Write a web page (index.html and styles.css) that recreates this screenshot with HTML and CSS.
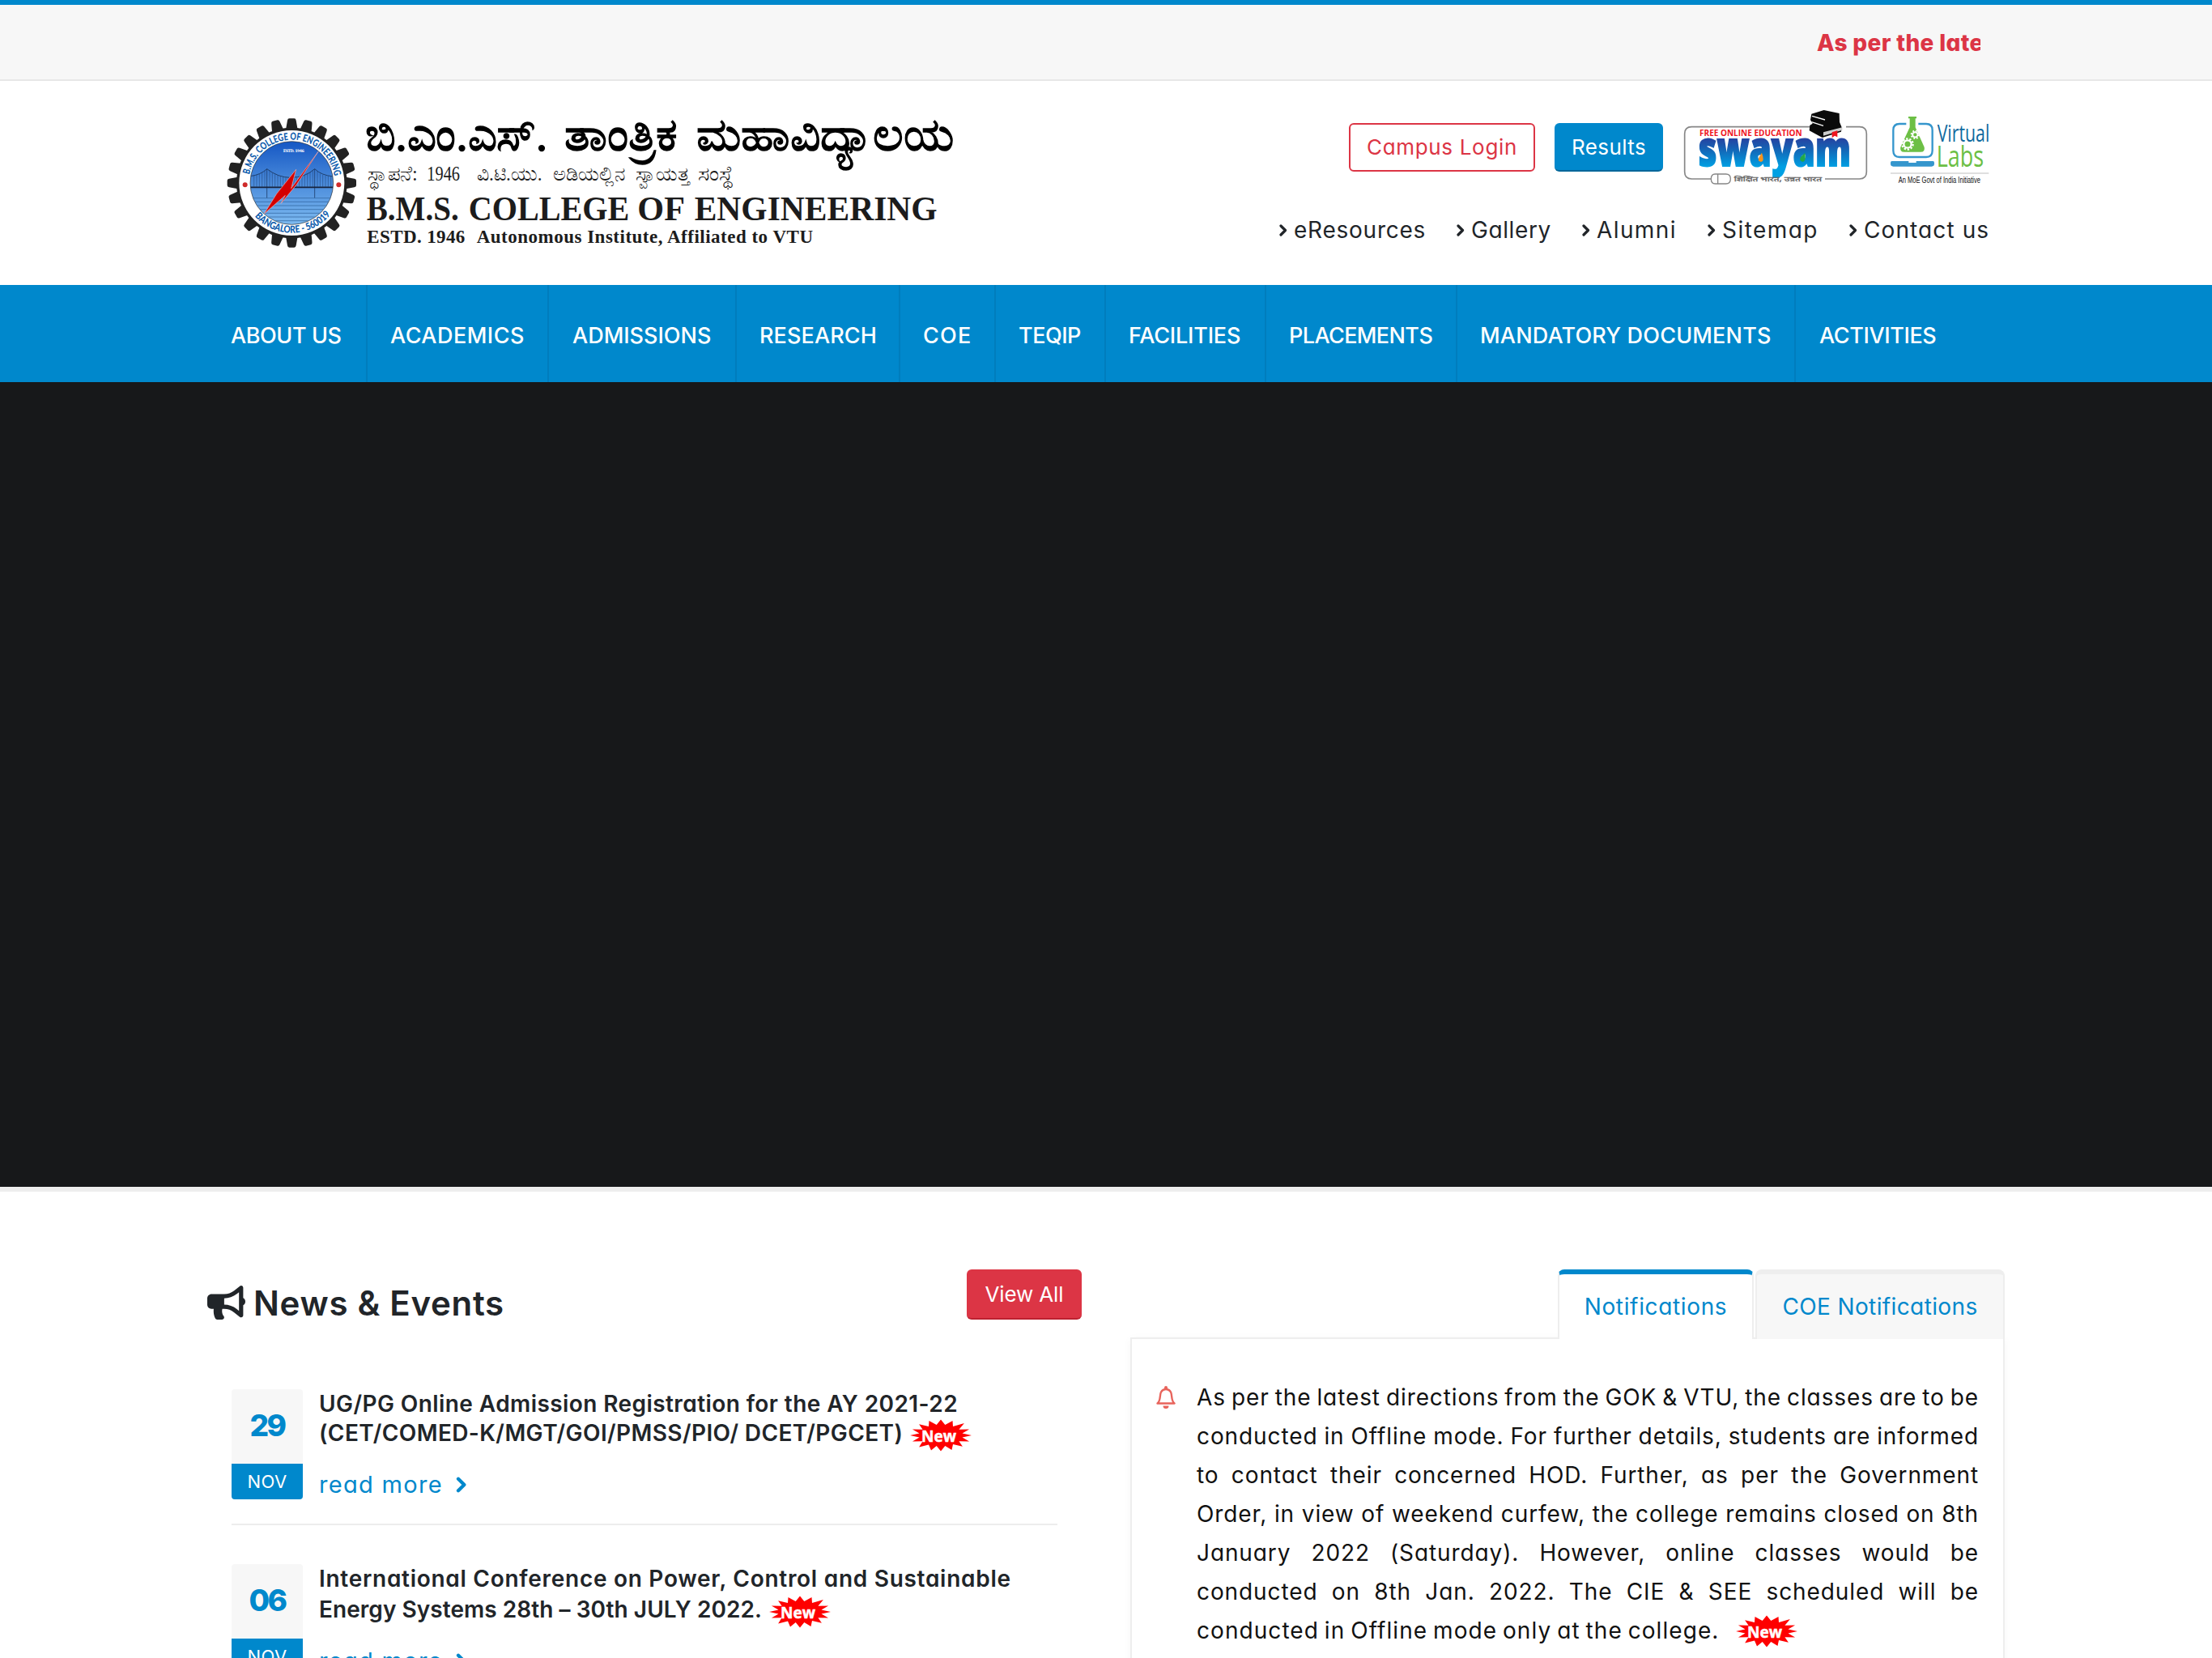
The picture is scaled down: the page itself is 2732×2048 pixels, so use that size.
FILE: index.html
```html
<!DOCTYPE html>
<html lang="en">
<head>
<meta charset="utf-8">
<title>B.M.S. College of Engineering</title>
<link rel="stylesheet" href="styles.css">
</head>
<body>
<svg class="defs" width="0" height="0" aria-hidden="true">
  <defs>
    <symbol id="chev" viewBox="0 0 10 15"><path d="M2 2l5.500 5.500L2 13" fill="none" stroke="currentColor" stroke-width="3.200" stroke-linecap="round" stroke-linejoin="round"/></symbol>
    <symbol id="new" viewBox="0 0 76 40">
      <path class="burst" d="M76 20L64.500 22.500 73.100 27.500 60.400 27.200 64.900 33.800 53 31 51.500 38 43.300 33 38 39.500 32.700 33 26 38.500 23 31.500 11.100 34.500 15.600 27.200 2.900 27.500 11.500 22.500 0 20 11.500 17.500 2.900 12.500 15.600 12.800 11.100 6.200 23 9 23.500 2 32.700 7 38 .5 43.300 7 52.500 2 53 9 66.900 5 60.400 12.800 73.100 12.500 64.500 17.500Z" fill="#fe0000"/>
      <text x="14" y="28" class="new-text" textLength="43" lengthAdjust="spacingAndGlyphs">New</text>
    </symbol>
  </defs>
</svg>

<div class="topbar"><div class="container"><div class="ticker">As per the latest directions</div></div></div>

<header class="header">
  <div class="container header-row">
    <svg class="logo" viewBox="60 60 2700 510" role="img" aria-label="B.M.S. College of Engineering">
      <defs>
        <linearGradient id="sky" x1="0" y1="0" x2="0" y2="1"><stop offset="0" stop-color="#1557c4"/><stop offset=".5" stop-color="#4a8bdb"/><stop offset="1" stop-color="#7dbaf0"/></linearGradient>
        <g id="tooth"><path d="M-23 -192L-16 -232Q-15 -239 -9 -239H9Q15 -239 16 -232L23 -192Z"/></g>
        <g id="teeth"><use href="#tooth"/><use href="#tooth" transform="rotate(15)"/><use href="#tooth" transform="rotate(30)"/></g>
        <path id="arc-top" d="M-157 -31A160 160 0 0 1 159 -18"/>
        <path id="arc-bottom" d="M-137 124A185 185 0 0 0 146 114"/>
        <clipPath id="disc"><circle r="153"/></clipPath>
      </defs>
      <g transform="translate(301 318)">
        <g fill="#222">
          <circle r="205"/>
          <use href="#teeth"/><use href="#teeth" transform="rotate(45)"/><use href="#teeth" transform="rotate(90)"/><use href="#teeth" transform="rotate(135)"/>
          <use href="#teeth" transform="rotate(180)"/><use href="#teeth" transform="rotate(225)"/><use href="#teeth" transform="rotate(270)"/><use href="#teeth" transform="rotate(315)"/>
        </g>
        <circle r="195" fill="#fff"/>
        <circle r="154" fill="url(#sky)" stroke="#333" stroke-width="2"/>
        <g clip-path="url(#disc)" fill="none" stroke="#1e3f6e" stroke-width="2">
          <path d="M-154 -25Q-115 -30 -92 -52Q-50 -20 -5 -20Q50 -20 85 -52Q110 -28 154 -24" stroke-width="3"/>
          <path d="M-140 -28V14M-130 -30V14M-120 -34V14M-110 -38V14M-100 -45V14M-82 -45V14M-72 -38V14M-62 -32V14M-52 -28V14M-42 -24V14M-32 -22V14M-22 -20V14M-12 -20V14M-2 -20V14M8 -20V14M18 -20V14M28 -22V14M38 -25V14M48 -28V14M58 -33V14M68 -40V14M78 -46V14M95 -44V14M105 -35V14M115 -30V14M125 -27V14M135 -25V14M145 -24V14" stroke-width="1.500"/>
          <path d="M-92 -52V56M85 -52V56" stroke-width="2.500"/>
          <path d="M-154 16H154" stroke="#16233c" stroke-width="5"/>
          <path d="M-145 56H145M-140 70H140M-136 84H136M-124 98H124M-112 112H112M-95 126H95M-80 140H80" stroke="#2c5f99"/>
        </g>
        <path d="M98 -116L-2 20 16 -50-56 40-102 114-24 46-40 76 18 6Z" fill="#d40000" stroke="#f3b0b0" stroke-width="2"/>
        <text x="-32" y="-115" class="seal-year" textLength="78">ESTD. 1946</text>
        <text class="seal-text"><textPath href="#arc-top" textLength="446" lengthAdjust="spacingAndGlyphs">B.M.S. COLLEGE OF ENGINEERING</textPath></text>
        <text class="seal-text"><textPath href="#arc-bottom" textLength="318" lengthAdjust="spacingAndGlyphs">BANGALORE - 560019</textPath></text>
        <circle cx="-173" cy="7" r="9" fill="#cf2a2a"/><circle cx="174" cy="7" r="9" fill="#cf2a2a"/>
      </g>
      <g class="kn-title">
        <text x="572" y="197" textLength="676" lengthAdjust="spacingAndGlyphs">ಬಿ.ಎಂ.ಎಸ್.</text>
        <text x="1312" y="197" textLength="418" lengthAdjust="spacingAndGlyphs">ತಾಂತ್ರಿಕ</text>
        <text x="1800" y="197" textLength="956" lengthAdjust="spacingAndGlyphs">ಮಹಾವಿದ್ಯಾಲಯ</text>
      </g>
      <g class="kn-sub">
        <text x="582" y="310" textLength="185" lengthAdjust="spacingAndGlyphs">ಸ್ಥಾಪನೆ:</text>
        <text x="802" y="310" textLength="122" lengthAdjust="spacingAndGlyphs">1946</text>
        <text x="987" y="310" textLength="242" lengthAdjust="spacingAndGlyphs">ವಿ.ಟಿ.ಯು.</text>
        <text x="1270" y="310" textLength="266" lengthAdjust="spacingAndGlyphs">ಅಡಿಯಲ್ಲಿನ</text>
        <text x="1574" y="310" textLength="202" lengthAdjust="spacingAndGlyphs">ಸ್ವಾಯತ್ತ</text>
        <text x="1806" y="310" textLength="134" lengthAdjust="spacingAndGlyphs">ಸಂಸ್ಥೆ</text>
      </g>
      <g class="en-title">
        <text x="578" y="456" textLength="342" lengthAdjust="spacingAndGlyphs">B.M.S.</text>
        <text x="956" y="456" textLength="596" lengthAdjust="spacingAndGlyphs">COLLEGE</text>
        <text x="1582" y="456" textLength="176" lengthAdjust="spacingAndGlyphs">OF</text>
        <text x="1793" y="456" textLength="900" lengthAdjust="spacingAndGlyphs">ENGINEERING</text>
      </g>
      <g class="en-sub">
        <text x="580" y="540" textLength="363">ESTD. 1946</text>
        <text x="986" y="540" textLength="1246">Autonomous Institute, Affiliated to VTU</text>
      </g>
    </svg>

    <div class="header-side">
      <div class="actions">
        <a class="btn btn-outline">Campus Login</a>
        <a class="btn btn-blue">Results</a>
        <svg class="swayam" viewBox="75 30 705 300" role="img" aria-label="Swayam">
          <defs><linearGradient id="sw" gradientUnits="userSpaceOnUse" x1="0" y1="150" x2="0" y2="285"><stop offset="0" stop-color="#27409f"/><stop offset=".35" stop-color="#1368b8"/><stop offset=".8" stop-color="#00a0e3"/><stop offset="1" stop-color="#00a0e3"/></linearGradient></defs>
          <path d="M560 110H118Q92 110 92 136V277Q92 303 118 303H205M612 303H740Q766 303 766 277V136Q766 110 740 110H690" fill="none" stroke="#868686" stroke-width="5"/>
          <path d="M262 303Q262 285 245 285H205Q190 285 190 303T205 321H245Q262 321 262 303ZM215 285V321" fill="#fff" stroke="#868686" stroke-width="4"/>
          <text x="147" y="143" class="sw-tag" textLength="380" lengthAdjust="spacingAndGlyphs">FREE ONLINE EDUCATION</text>
          <text x="143" y="256" class="sw-name" textLength="565" lengthAdjust="spacingAndGlyphs">swayam</text>
          <path d="M378 206Q390 238 375 240Q360 238 368 222Z" fill="#f7931e"/>
          <path d="M538 206Q543 236 530 240Q514 236 522 222Z" fill="#22a94a"/>
          <text x="275" y="312" class="sw-sub" textLength="325" lengthAdjust="spacingAndGlyphs">शिक्षित भारत, उन्नत भारत</text>
          <path d="M562 62L608 48 665 60 666 92 674 112 672 128 602 150 554 124 556 104 566 98 558 84Z" fill="#0a0a0a"/>
          <path d="M564 70L612 84M562 92L606 106" stroke="#fff" stroke-width="4"/>
          <path d="M606 130L676 112V122L606 143Z" fill="#ccc"/>
          <path d="M638 130L658 124V148L648 143 638 151Z" fill="#f0141e"/>
        </svg>
        <svg class="vlabs" viewBox="840 60 390 270" role="img" aria-label="Virtual Labs">
          <path d="M913 99H888Q865 99 865 122V198Q865 222 888 222H987Q1010 222 1010 198V122Q1010 99 987 99H958" fill="none" stroke="#3596cd" stroke-width="7"/>
          <path d="M860 237H922V243H950V237H1012Q1017 237 1017 243V247Q1017 257 1007 257H865Q855 257 855 247V243Q855 237 860 237Z" fill="#3596cd"/>
          <path d="M921 72H951V79H947V112L980 185Q984 203 966 203H906Q888 203 892 185L926 112V79H921Z" fill="#6cbf45"/>
          <circle cx="918" cy="174" r="20" fill="none" stroke="#fff" stroke-width="7" stroke-dasharray="7 5.570"/>
          <circle cx="918" cy="174" r="14" fill="none" stroke="#fff" stroke-width="7"/>
          <circle cx="946" cy="139" r="14" fill="none" stroke="#fff" stroke-width="6" stroke-dasharray="5.500 5.500"/>
          <circle cx="946" cy="139" r="9.500" fill="none" stroke="#fff" stroke-width="6"/>
          <text x="1028" y="164" class="vl-a" textLength="194" lengthAdjust="spacingAndGlyphs">Virtual</text>
          <text x="1025" y="257" class="vl-b" textLength="175" lengthAdjust="spacingAndGlyphs">Labs</text>
          <path d="M855 282H1219" stroke="#d5d5d5" stroke-width="4"/>
          <text x="884" y="317" class="vl-c" textLength="304" lengthAdjust="spacingAndGlyphs">An MoE Govt of India Initiative</text>
        </svg>
      </div>
      <nav class="quick">
        <a class="q1"><svg><use href="#chev"/></svg>eResources</a>
        <a class="q2"><svg><use href="#chev"/></svg>Gallery</a>
        <a class="q3"><svg><use href="#chev"/></svg>Alumni</a>
        <a class="q4"><svg><use href="#chev"/></svg>Sitemap</a>
        <a class="q5"><svg><use href="#chev"/></svg>Contact us</a>
      </nav>
    </div>
  </div>
</header>

<nav class="mainnav">
  <div class="container menu">
    <a class="m1">ABOUT US</a><a class="m2">ACADEMICS</a><a class="m3">ADMISSIONS</a><a class="m4">RESEARCH</a><a class="m5">COE</a><a class="m6">TEQIP</a><a class="m7">FACILITIES</a><a class="m8">PLACEMENTS</a><a class="m9">MANDATORY DOCUMENTS</a><a class="m10">ACTIVITIES</a>
  </div>
</nav>

<section class="hero"></section>

<main class="container columns">
  <section class="news">
    <div class="news-head">
      <h2><svg viewBox="0 0 576 512"><path fill="currentColor" d="M576 240c0-23.630-12.950-44.040-32-55.120V32.010C544 23.260 537.020 0 512 0c-7.120 0-14.190 2.380-19.980 7.020l-85.030 68.030C364.280 109.190 310.660 128 256 128H64c-35.350 0-64 28.650-64 64v96c0 35.350 28.650 64 64 64h33.700c-1.390 10.480-2.180 21.140-2.180 32 0 39.770 9.260 77.350 25.560 110.940 5.190 10.690 16.520 17.060 28.400 17.060h74.280c26.050 0 41.690-29.840 25.900-50.560-16.400-21.520-26.150-48.360-26.150-77.440 0-11.110 1.620-21.790 4.410-32H256c54.660 0 108.280 18.810 150.980 52.950l85.030 68.030a32.023 32.023 0 0 0 19.980 7.020c24.920 0 32-22.780 32-32V295.130C563.050 284.040 576 263.630 576 240zm-96 141.420l-33.050-26.440C392.950 311.780 325.120 288 256 288v-96c69.120 0 136.950-23.780 190.950-66.980L480 98.580v282.840z"/></svg>News &amp; Events</h2>
      <a class="btn btn-red">View All</a>
    </div>
    <article class="item">
      <div class="date"><span class="day">29</span><span class="month">NOV</span></div>
      <div>
        <h4><span class="l1">UG/PG Online Admission Registration for the AY 2021-22</span><span class="l2">(CET/COMED-K/MGT/GOI/PMSS/PIO/ DCET/PGCET)<svg class="new"><use href="#new"/></svg></span></h4>
        <a class="more">read more<svg><use href="#chev"/></svg></a>
      </div>
    </article>
    <article class="item">
      <div class="date"><span class="day">06</span><span class="month">NOV</span></div>
      <div>
        <h4><span class="l3">International Conference on Power, Control and Sustainable</span><span class="l4">Energy Systems 28th – 30th JULY 2022.<svg class="new"><use href="#new"/></svg></span></h4>
        <a class="more">read more<svg><use href="#chev"/></svg></a>
      </div>
    </article>
  </section>

  <section class="notices">
    <div class="tabs"><a class="tab active">Notifications</a><a class="tab">COE Notifications</a></div>
    <div class="panel">
      <svg class="bell" viewBox="0 0 24 28"><path d="M1.500 21.500C6 18 4 11 6 7.500Q8 4 12 4T18 7.500C20 11 18 18 22.500 21.500Z" fill="none" stroke="#e8645c" stroke-width="2.400" stroke-linejoin="round"/><path d="M12 0a2 2 0 0 1 2 2v2h-4V2a2 2 0 0 1 2-2ZM8.500 24.500h7a3.500 3.500 0 0 1-7 0Z" fill="#e8645c"/></svg>
      <p>
        <span>As per the latest directions from the GOK &amp; VTU, the classes are to be</span>
        <span>conducted in Offline mode. For further details, students are informed</span>
        <span>to contact their concerned HOD. Further, as per the Government</span>
        <span>Order, in view of weekend curfew, the college remains closed on 8th</span>
        <span>January 2022 (Saturday). However, online classes would be</span>
        <span>conducted on 8th Jan. 2022. The CIE &amp; SEE scheduled will be</span>
        <span class="last">conducted in Offline mode only at the college.<svg class="new"><use href="#new"/></svg></span>
      </p>
    </div>
  </section>
</main>
</body>
</html>
```
FILE: styles.css
```css
*{box-sizing:border-box}
body{margin:0;height:2048px;overflow:hidden;background:#fff;color:#212529;font-family:Inter,"Open Sans",sans-serif;font-size:28px;font-feature-settings:"cv11"}
h2,h4,p{margin:0}
.defs{display:block;height:0}
.container{width:2220px;margin:0 auto}

.topbar{height:100px;border-top:6px solid #08c;border-bottom:2px solid #e7e7e7;background:#f7f7f7;padding-top:29px}
.ticker{width:202px;margin-left:1988px;overflow:hidden;white-space:nowrap;font-size:28px;font-weight:800;line-height:36px;letter-spacing:.35px;color:#dc3545}

.header{height:252px}
.header-row{display:flex;justify-content:space-between;padding:0 16px 0 24px}
.logo{width:900px;height:170px;margin-top:40px}
.logo text{fill:#1c1c1c}
.logo .seal-text{font:900 37px Lato,sans-serif;fill:#0d5cad}
.logo .seal-year{font:700 14px "DejaVu Serif",serif;fill:#fff}
.logo .kn-title text{font-family:"Liberation Serif",serif;font-size:174px;fill:#000;stroke:#000;stroke-width:5px}
.logo .kn-sub{font-family:"Liberation Serif",serif;font-size:74px}
.logo .en-title{font:700 124px "Liberation Serif",serif}
.logo .en-sub{font:700 69px "Liberation Serif",serif}

.header-side{padding-top:30px;display:flex;flex-direction:column;align-items:flex-end}
.actions{display:flex;align-items:flex-start;height:100px}
.btn{display:flex;align-items:center;justify-content:center;height:60px;border-radius:6px;font-size:26px;white-space:nowrap}
.btn-outline{width:230px;margin:22px 24px 0 0;padding-bottom:2px;border:2px solid #dc3545;color:#dc3545;letter-spacing:.68px}
.btn-blue{width:134px;margin:22px 21px 0 0;background:#08c;border-bottom:2px solid #006699;color:#fff;letter-spacing:.4px}
.btn-red{width:142px;height:62px;background:#dc3545;border-bottom:2px solid #bd2130;color:#fff;letter-spacing:-.15px}
.swayam{width:235px;height:100px;margin-right:20px}
.vlabs{width:130px;height:90px;margin-top:10px}
.sw-tag{font:700 29px "Open Sans",sans-serif;fill:#f0141e}
.sw-name{font:800 182px "Open Sans",sans-serif;fill:url(#sw);stroke:url(#sw);stroke-width:6px}
.sw-sub{font:24px "Noto Sans",sans-serif;fill:#666;stroke:#666;stroke-width:1px}
.vl-a{font:88px "Open Sans",sans-serif;fill:#0f6a9f}
.vl-b{font:108px "Open Sans",sans-serif;fill:#6cbf45}
.vl-c{font:30px "Liberation Sans",sans-serif;fill:#111}
.quick{display:grid;grid-template-columns:219px 155px 155px 175px 176px;margin-top:34px;line-height:40px}
.quick a{display:flex;align-items:center;gap:8px;white-space:nowrap}
.quick svg{width:10px;height:15px}
.q1{letter-spacing:.75px}
.q2{letter-spacing:.6px}
.q3{letter-spacing:1.4px}
.q4{letter-spacing:1.45px}
.q5{letter-spacing:1.1px}

.mainnav{height:120px;background:#08c}
.menu{display:flex;height:120px}
.menu a{flex:none;display:flex;align-items:center;padding:4px 0 0 28px;border-left:2px solid #007dbd;color:#fff;font-size:27px;font-weight:500;white-space:nowrap}
.menu .m1{width:196px;padding-left:27px;border-color:transparent;letter-spacing:-.4px}
.m2{width:224px;letter-spacing:.49px}
.menu .m3{width:232px;padding-left:29px}
.m4{width:202px;letter-spacing:.1px}
.m5{width:118px;letter-spacing:1.2px}
.m6{width:136px;letter-spacing:-.5px}
.m7{width:198px;letter-spacing:-.19px}
.m8{width:236px;letter-spacing:-.6px}
.m9{width:418px;letter-spacing:.18px}
.menu .m10{width:200px;padding-left:29px;letter-spacing:-.38px}

.hero{height:1000px;background:#17181a;border-bottom:6px solid #eee}

.columns{display:grid;grid-template-columns:1080px 1080px;gap:60px;padding-top:96px}
.news-head{display:flex;justify-content:space-between;height:148px}
.news-head h2{display:flex;align-items:center;gap:10px;height:50px;margin-top:16px;font-size:42px;font-weight:600;letter-spacing:.7px}
.news-head h2 svg{width:47px;height:42px}
.item{display:flex;gap:20px;height:168px;margin:0 30px 48px;border-bottom:2px solid #ededed}
.date{width:88px;height:136px;border-radius:4px;overflow:hidden;background:#f7f7f7;text-align:center}
.day{display:block;height:92px;line-height:90px;font-size:37px;font-weight:800;letter-spacing:-2.5px;color:#08c}
.month{display:block;height:44px;line-height:44px;font-size:22px;letter-spacing:.4px;background:#08c;color:#fff}
.item h4{font-size:28px;font-weight:600;line-height:36px}
.item h4 span{display:flex;align-items:flex-start;height:36px;white-space:nowrap}
.l1{letter-spacing:.42px}
.l2{letter-spacing:.4px}
.l3{letter-spacing:.72px}
.item h4 .l4{letter-spacing:.05px;margin-top:2px}
.new{flex:none;width:78px;height:40px;margin:1px 0 0 8px}
.burst{filter:blur(.6px)}
.new-text{font:700 20px "Open Sans",sans-serif;fill:#fff;stroke:#fff;stroke-width:.5px;letter-spacing:0}
.more{display:flex;align-items:center;gap:16px;margin-top:26px;line-height:40px;font-size:29px;letter-spacing:1.3px;color:#08c}
.more svg{width:14px;height:20px}

.tabs{display:flex;justify-content:flex-end;gap:2px;height:84px}
.tab{position:relative;display:flex;align-items:center;justify-content:center;width:308px;height:86px;border:2px solid #eee;border-top-width:6px;border-bottom:0;border-radius:8px 8px 0 0;background:#f7f7f7;color:#08c;letter-spacing:.38px}
.tab.active{width:242px;border-top-color:#08c;background:#fff;letter-spacing:.65px}
.panel{display:flex;height:420px;border:2px solid #eee;padding:48px 30px 0;box-shadow:0 2px 10px rgba(0,0,0,.04)}
.bell{flex:none;width:24px;height:28px;margin:10px 26px 0 0}
.panel p{flex:none;width:966px;color:#111;line-height:48px;letter-spacing:.9px;word-spacing:-2px}
.panel p span{display:block;height:48px;white-space:nowrap;text-align:justify;text-align-last:justify}
.panel p .last{display:flex;letter-spacing:1.06px}
.last .new{margin:5px 0 0 20px}
```
